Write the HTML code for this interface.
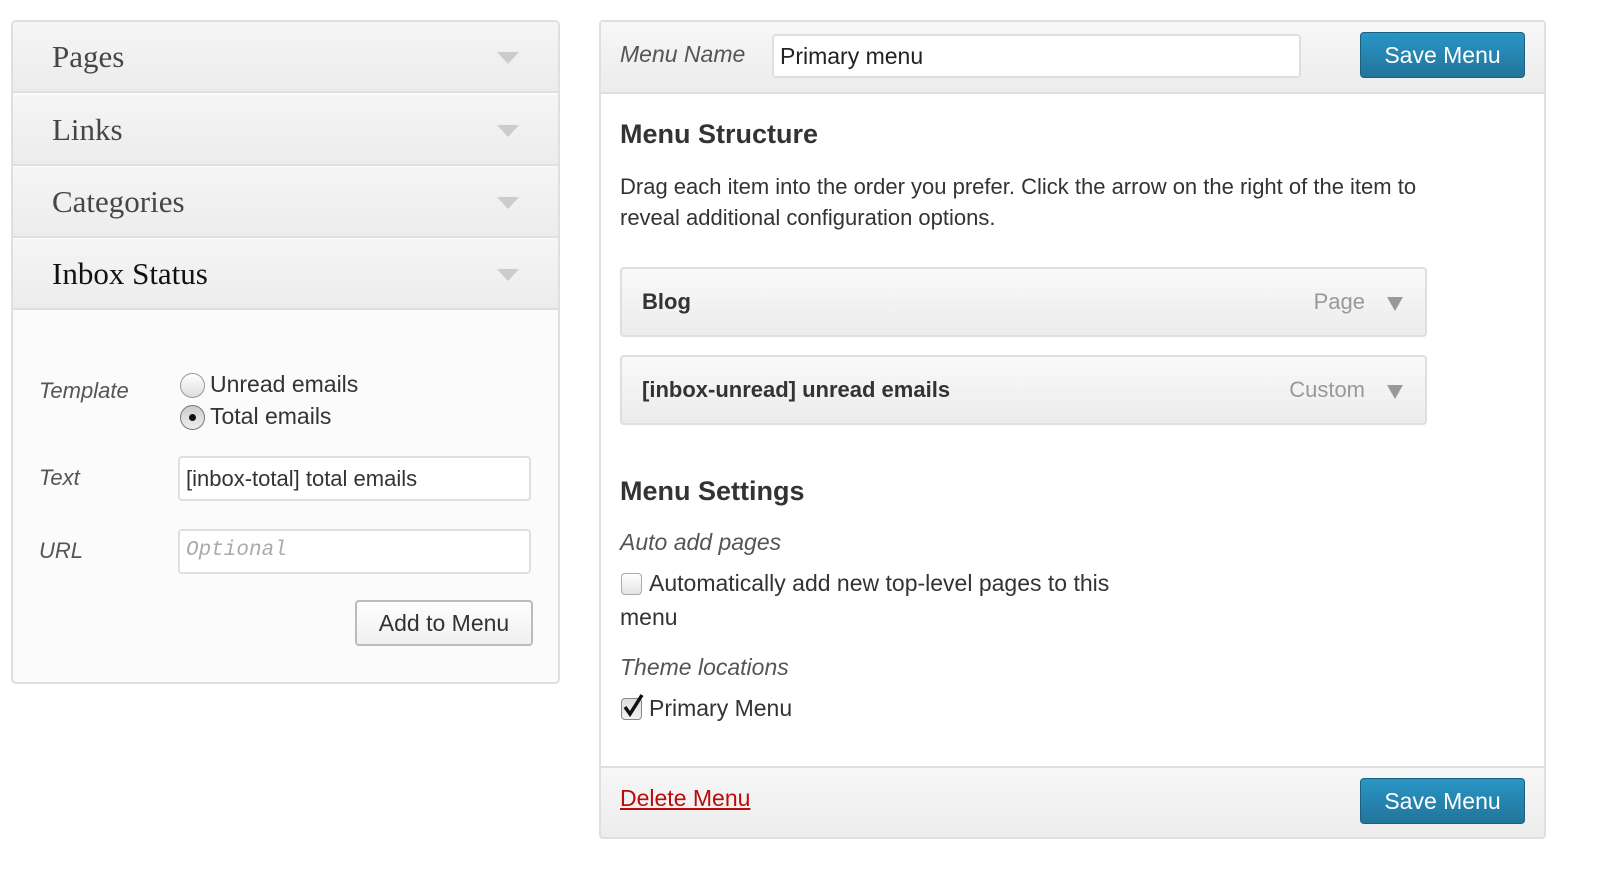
<!DOCTYPE html>
<html><head><meta charset="utf-8"><style>
*{box-sizing:border-box;margin:0;padding:0}
body{width:1600px;height:876px;background:#fff;font-family:"Liberation Sans",Arial,sans-serif;color:#333;position:relative;overflow:hidden}
.a{position:absolute}
.lp{left:11px;top:20px;width:549px;height:664px;border:2px solid #dfdfdf;border-radius:5px;background:#fbfbfb;overflow:hidden}
.row{position:absolute;left:0;width:545px;height:71px;background:linear-gradient(#f5f5f5,#ececec);border-bottom:2px solid #dfdfdf;font-family:"Liberation Serif",Georgia,serif;font-size:31px;color:#464646;padding-left:39px;line-height:70px}
.tri{position:absolute;right:39px;top:30px;width:0;height:0;border-left:11px solid transparent;border-right:11px solid transparent;border-top:12px solid #ccc}
.lab{font-style:italic;font-size:22px;color:#555}
.inp{border:2px solid #dfdfdf;border-radius:4px;background:#fff;font-size:22px;padding-left:6px}
.btn{background:linear-gradient(#2a95c5,#21759b);border:1px solid #1b607f;border-radius:4px;color:#fff;font-size:23px;text-align:center;line-height:44px}
.item{position:absolute;left:620px;width:807px;height:70px;border:2px solid #dfdfdf;border-radius:4px;background:linear-gradient(#f9f9f9,#ececec);font-weight:bold;font-size:22px;padding-left:20px;line-height:66px;color:#333}
.item .t{position:absolute;right:60px;top:0;font-weight:normal;color:#999;font-size:22px}
.item .d{position:absolute;right:22px;top:28px;border-left:8px solid transparent;border-right:8px solid transparent;border-top:14px solid #999}
</style></head><body>
<div class="a lp">
<div class="row" style="top:0">Pages<div class="tri"></div></div>
<div class="row" style="top:73px">Links<div class="tri"></div></div>
<div class="row" style="top:145px">Categories<div class="tri"></div></div>
<div class="row" style="top:217px;color:#111">Inbox Status<div class="tri"></div></div>
</div>
<div class="a lab" style="left:39px;top:378px">Template</div>
<div class="a" style="left:180px;top:373px;width:25px;height:25px;border-radius:50%;border:1px solid #999;background:linear-gradient(#fff,#ddd)"></div>
<div class="a" style="left:180px;top:405px;width:25px;height:25px;border-radius:50%;border:1px solid #777;background:linear-gradient(#ccc,#eee)"><div style="position:absolute;left:8px;top:8px;width:7px;height:7px;border-radius:50%;background:#111"></div></div>
<div class="a" style="left:210px;top:371px;font-size:23px">Unread emails</div>
<div class="a" style="left:210px;top:403px;font-size:23px">Total emails</div>
<div class="a lab" style="left:39px;top:465px">Text</div>
<div class="a inp" style="left:178px;top:456px;width:353px;height:45px;line-height:41px">[inbox-total] total emails</div>
<div class="a lab" style="left:39px;top:538px">URL</div>
<div class="a inp" style="left:178px;top:529px;width:353px;height:45px;line-height:39px;font-family:'Liberation Mono',monospace;font-style:italic;color:#aaa;font-size:21px">Optional</div>
<div class="a" style="left:355px;top:600px;width:178px;height:46px;border:2px solid #bbb;border-radius:4px;background:linear-gradient(#fefefe,#f0f0f0);font-size:23px;text-align:center;line-height:42px;color:#333">Add to Menu</div>

<div class="a" style="left:599px;top:20px;width:947px;height:819px;border:2px solid #dfdfdf;border-radius:4px;background:#fff;overflow:hidden">
<div class="a" style="left:0;top:0;width:945px;height:72px;background:linear-gradient(#f7f7f7,#ececec);border-bottom:2px solid #dfdfdf"></div>
<div class="a" style="left:0;top:744px;width:945px;height:75px;background:linear-gradient(#f7f7f7,#ececec);border-top:2px solid #dfdfdf"></div>
</div>
<div class="a lab" style="left:620px;top:41px;font-size:23px">Menu Name</div>
<div class="a inp" style="left:772px;top:34px;width:529px;height:44px;line-height:40px;font-size:23px;color:#222">Primary menu</div>
<div class="a btn" style="left:1360px;top:32px;width:165px;height:46px">Save Menu</div>
<div class="a" style="left:620px;top:119px;font-size:27px;font-weight:bold;color:#333">Menu Structure</div>
<div class="a" style="left:620px;top:171px;font-size:22px;line-height:31px;width:820px">Drag each item into the order you prefer. Click the arrow on the right of the item to reveal additional configuration options.</div>
<div class="item" style="top:267px">Blog<span class="t">Page</span><span class="d"></span></div>
<div class="item" style="top:355px">[inbox-unread] unread emails<span class="t">Custom</span><span class="d"></span></div>
<div class="a" style="left:620px;top:476px;font-size:27px;font-weight:bold">Menu Settings</div>
<div class="a lab" style="left:620px;top:529px;font-size:23px">Auto add pages</div>
<div class="a" style="left:621px;top:573px;width:21px;height:22px;border:1px solid #aaa;border-radius:4px;background:linear-gradient(#fff,#e5e5e5)"></div>
<div class="a" style="left:649px;top:570px;font-size:23px">Automatically add new top-level pages to this</div>
<div class="a" style="left:620px;top:604px;font-size:23px">menu</div>
<div class="a lab" style="left:620px;top:654px;font-size:23px">Theme locations</div>
<div class="a" style="left:621px;top:698px;width:21px;height:22px;border:1px solid #888;border-radius:4px;background:linear-gradient(#ddd,#f2f2f2)"></div>
<svg class="a" style="left:620px;top:692px" width="26" height="28"><path d="M5 15 L10 22 L22 3" stroke="#111" stroke-width="3.5" fill="none"/></svg>
<div class="a" style="left:649px;top:695px;font-size:23px">Primary Menu</div>
<div class="a" style="left:620px;top:785px;font-size:23px;color:#bc0b0b;text-decoration:underline">Delete Menu</div>
<div class="a btn" style="left:1360px;top:778px;width:165px;height:46px">Save Menu</div>
</body></html>
